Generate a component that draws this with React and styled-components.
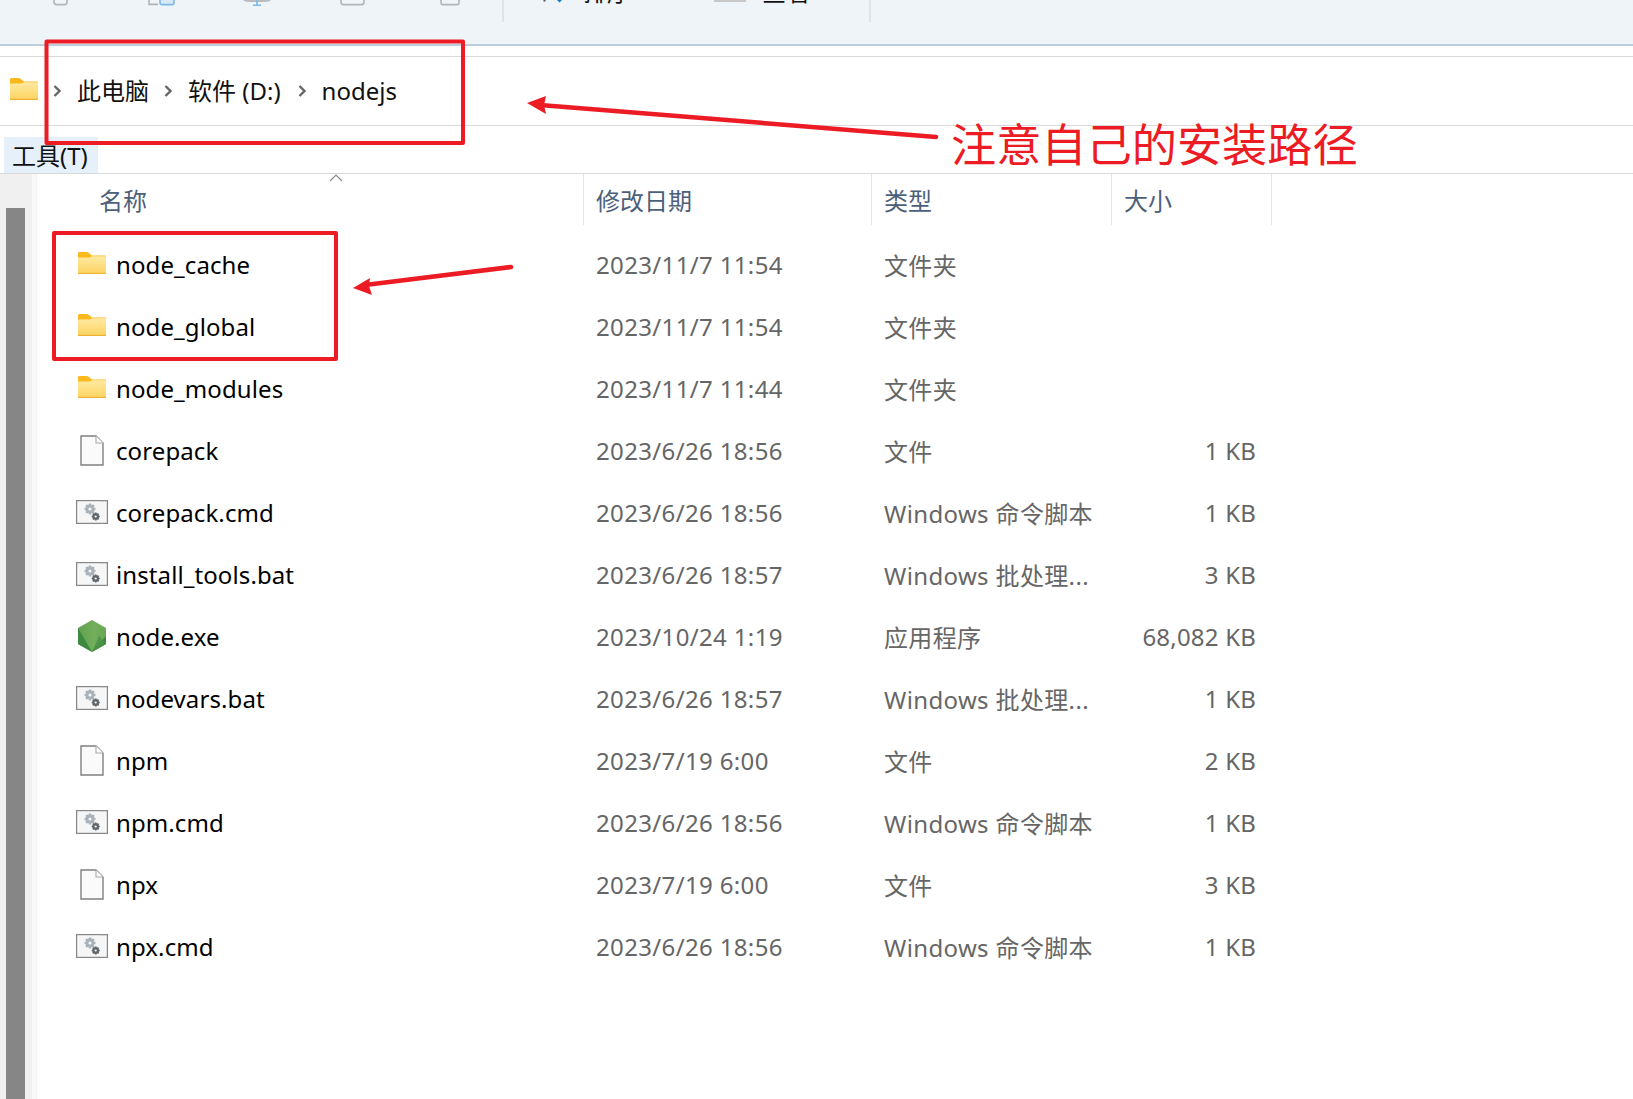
import React from 'react';
import styled, { createGlobalStyle } from 'styled-components';

const GlobalStyle = createGlobalStyle`
    html, body {
        margin: 0;
        padding: 0;
        height: 100%;
        background: #fff;
        overflow: hidden;
    }
    #root {
        height: 1099px;
    }
`;

const FONT = `"Noto Sans", "Noto Sans CJK SC", sans-serif`;

const Page = styled.div`
    position: relative;
    display: flex;
    flex-direction: column;
    width: 1633px;
    height: 1099px;
    overflow: hidden;
    font-family: ${FONT};
    font-size: 24px;
    color: #000;
    background: #fff;
`;

const Ribbon = styled.div`
    display: flex;
    height: 44px;
    flex-shrink: 0;
    background: #eff4f9;
    border-bottom: 2px solid #bccddc;
`;

const RibbonGroup = styled.div`
    display: flex;
    height: 22px;
    width: ${p => p.$width}px;
    border-right: 2px solid #e0e4e8;
`;

const TopIcon = styled.svg`
    display: block;
    margin-left: ${p => p.$left}px;
    flex-shrink: 0;
`;

const RibbonLabel = styled.span`
    margin-left: ${p => p.$left}px;
    margin-top: -25px;
    line-height: 34px;
    font-size: 24px;
    color: #111;
`;

const AddressBar = styled.div`
    display: flex;
    align-items: center;
    height: 68px;
    margin-top: 10px;
    padding-left: 10px;
    flex-shrink: 0;
    border-top: 1px solid #d9d9d9;
    border-bottom: 1px solid #d9d9d9;
`;

const Crumb = styled.span`
    margin-left: ${p => p.$left}px;
    padding-bottom: 1px;
    line-height: 32px;
    white-space: nowrap;
    color: #111;
`;

const Chevron = styled.svg`
    margin-left: ${p => p.$left}px;
    flex-shrink: 0;
`;

const MenuRow = styled.div`
    height: 48px;
    flex-shrink: 0;
    padding: 11px 0 0 4px;
    box-sizing: border-box;
    border-bottom: 1px solid #d9d9d9;
`;

const MenuItem = styled.div`
    width: 94px;
    height: 36px;
    padding-left: 8px;
    box-sizing: border-box;
    line-height: 38px;
    background: #e5f0fa;
    color: #111;
`;

const Body = styled.div`
    display: flex;
    flex: 1;
    min-height: 0;
`;

const ScrollTrack = styled.div`
    width: 19px;
    padding: 34px 7px 0 6px;
    background: #f0f0f0;
    border-right: 4px solid #f9f9f9;
    flex-shrink: 0;
`;

const ScrollThumb = styled.div`
    height: 100%;
    background: #868686;
`;

const List = styled.div`
    position: relative;
    flex: 1;
    border-left: 1px solid #f3f3f3;
`;

const Columns = `
    display: grid;
    grid-template-columns: 547px 288px 240px 160px;
`;

const HeaderRow = styled.div`
    ${Columns}
    height: 51px;
    margin-bottom: 8px;
`;

const HeaderCell = styled.div`
    display: flex;
    align-items: center;
    padding: 2px 0 0 ${p => p.$pad}px;
    border-right: 1px solid #e5e5e5;
    color: #4c607a;
    line-height: 48px;
`;

const SortCaret = styled.svg`
    position: absolute;
    left: 292px;
    top: -1px;
`;

const FileRow = styled.div`
    ${Columns}
    height: 62px;
    align-items: center;
`;

const NameCell = styled.div`
    display: flex;
    align-items: center;
    gap: 8px;
    padding-left: 39px;
`;

const IconSlot = styled.div`
    display: flex;
    align-items: center;
    justify-content: center;
    width: 32px;
    height: 34px;
    flex-shrink: 0;
`;

const FileName = styled.span`
    letter-spacing: 0.1px;
    color: #000;
    white-space: nowrap;
`;

const DataCell = styled.div`
    padding-left: 12px;
    color: #666;
    white-space: nowrap;
    letter-spacing: 0.35px;
`;

const SizeCell = styled.div`
    padding-right: 16px;
    color: #666;
    text-align: right;
    white-space: nowrap;
    letter-spacing: 0.2px;
`;

const Markup = styled.svg`
    position: absolute;
    left: 0;
    top: 0;
    pointer-events: none;
`;

const Note = styled.div`
    position: absolute;
    left: 951px;
    top: 111px;
    font-family: "Noto Sans CJK SC", sans-serif;
    font-size: 45.2px;
    line-height: 64px;
    color: #ed1c24;
    white-space: nowrap;
`;

const FolderSvg = styled.svg`
    display: block;
    flex-shrink: 0;
    margin-bottom: ${p => p.$lift}px;
`;

const FolderIcon = ({ lift }) => (
    <FolderSvg $lift={lift} width="28" height="22" viewBox="0 0 28 22">
        <defs>
            <linearGradient id="folderFill" x1="0" y1="0" x2="0" y2="1">
                <stop offset="0" stopColor="#ffeaa2" />
                <stop offset="1" stopColor="#fcd360" />
            </linearGradient>
        </defs>
        <path d="M0 1.4C0 .6.6 0 1.4 0h7.4c.6 0 1 .2 1.4.6L14 3.4h13c.6 0 1 .4 1 1V6H0z" fill="#fcb91e" />
        <path d="M0 5.4h11.5c.8 0 1.4-.3 2-.9l.6-.3H28V21c0 .6-.4 1-1 1H1c-.6 0-1-.4-1-1z" fill="url(#folderFill)" />
        <rect x="0" y="20.8" width="28" height="1.2" fill="#edb233" />
    </FolderSvg>
);

const DocIcon = () => (
    <svg width="24" height="31" viewBox="0 0 24 31">
        <path d="M1 1h15l7 7v22H1z" fill="#fafafa" stroke="#808080" strokeWidth="1.4" />
        <path d="M16 1v7h7" fill="#fff" stroke="#a8a8a8" strokeWidth="1.1" />
    </svg>
);

const Gear = ({ x, y, r, fill }) => {
    const teeth = [0, 45, 90, 135].map(a => (
        <rect key={a} x={x - r * 0.28} y={y - r * 1.25} width={r * 0.56} height={r * 2.5} fill={fill} transform={`rotate(${a} ${x} ${y})`} />
    ));
    return (
        <g>
            {teeth}
            <circle cx={x} cy={y} r={r} fill={fill} />
            <circle cx={x} cy={y} r={r * 0.35} fill="#f6f6f6" />
        </g>
    );
};

const ScriptIcon = () => (
    <svg width="32" height="25" viewBox="0 0 32 25">
        <rect x=".6" y=".6" width="30.8" height="22.8" fill="#f6f6f6" stroke="#868686" strokeWidth="1.2" />
        <path d="M25 1.4h6" stroke="#c6c6c6" strokeWidth="1.2" strokeDasharray="1 1" />
        <Gear x={14} y={9} r={4.4} fill="#a9b1ba" />
        <Gear x={19.7} y={16.5} r={3.2} fill="#5f666c" />
    </svg>
);

const NodeIcon = () => (
    <svg width="28" height="32" viewBox="0 0 28 32">
        <defs>
            <linearGradient id="nodeFill" x1="0" y1="0" x2="1" y2="0">
                <stop offset="0" stopColor="#5fa04e" />
                <stop offset=".55" stopColor="#72ae5c" />
                <stop offset="1" stopColor="#68a655" />
            </linearGradient>
        </defs>
        <path d="M14 0l14 8v16l-14 8-14-8V8z" fill="url(#nodeFill)" />
        <path d="M0 8l14 24-14-8z" fill="#3c8a3f" />
        <path d="M28 16v8l-14 8z" fill="#3f873f" />
        <path d="M14 32l7-16 7 8z" fill="#4a9247" opacity=".85" />
    </svg>
);

const icons = {
    folder: <FolderIcon lift={2} />,
    doc: <DocIcon />,
    script: <ScriptIcon />,
    node: <NodeIcon />,
};

const files = [
    { name: 'node_cache', date: '2023/11/7 11:54', type: '文件夹', size: '', icon: 'folder' },
    { name: 'node_global', date: '2023/11/7 11:54', type: '文件夹', size: '', icon: 'folder' },
    { name: 'node_modules', date: '2023/11/7 11:44', type: '文件夹', size: '', icon: 'folder' },
    { name: 'corepack', date: '2023/6/26 18:56', type: '文件', size: '1 KB', icon: 'doc' },
    { name: 'corepack.cmd', date: '2023/6/26 18:56', type: 'Windows 命令脚本', size: '1 KB', icon: 'script' },
    { name: 'install_tools.bat', date: '2023/6/26 18:57', type: 'Windows 批处理...', size: '3 KB', icon: 'script' },
    { name: 'node.exe', date: '2023/10/24 1:19', type: '应用程序', size: '68,082 KB', icon: 'node' },
    { name: 'nodevars.bat', date: '2023/6/26 18:57', type: 'Windows 批处理...', size: '1 KB', icon: 'script' },
    { name: 'npm', date: '2023/7/19 6:00', type: '文件', size: '2 KB', icon: 'doc' },
    { name: 'npm.cmd', date: '2023/6/26 18:56', type: 'Windows 命令脚本', size: '1 KB', icon: 'script' },
    { name: 'npx', date: '2023/7/19 6:00', type: '文件', size: '3 KB', icon: 'doc' },
    { name: 'npx.cmd', date: '2023/6/26 18:56', type: 'Windows 命令脚本', size: '1 KB', icon: 'script' },
];

const CrumbChevron = ({ left }) => (
    <Chevron $left={left} width="9" height="14" viewBox="0 0 9 14">
        <path d="M1.5 2L6.5 7l-5 5" fill="none" stroke="#666" strokeWidth="2.4" />
    </Chevron>
);

export default function App() {
    return (
        <Page>
            <GlobalStyle />
            <Ribbon>
                <RibbonGroup $width={502}>
                    <TopIcon $left={53} width="15" height="6" viewBox="0 0 15 6">
                        <path d="M1 0v2c0 1.6 1 2.6 2.6 2.6h8c1.6 0 2.4-1 2.4-2.6V0" fill="none" stroke="#b4b4b4" strokeWidth="1.6" />
                    </TopIcon>
                    <TopIcon $left={80} width="28" height="6" viewBox="0 0 28 6">
                        <path d="M1 0v4.4h9" fill="none" stroke="#b4b4b4" strokeWidth="1.6" />
                        <path d="M12 0v3c0 1 .5 1.6 1.6 1.6h10.8c1 0 1.6-.6 1.6-1.6V0" fill="#d8e9f8" stroke="#7db8e8" strokeWidth="1.6" />
                    </TopIcon>
                    <TopIcon $left={67} width="28" height="6" viewBox="0 0 28 6">
                        <path d="M0 0c2 2 5 2 10 2h8c5 0 8 0 10-2z" fill="#b8bcc0" />
                        <path d="M14 0v5M10 5.2h8" stroke="#7db8e8" strokeWidth="1.6" />
                    </TopIcon>
                    <TopIcon $left={69} width="25" height="6" viewBox="0 0 25 6">
                        <path d="M1 0v2c0 1.6 1 2.6 2.6 2.6h18c1.6 0 2.4-1 2.4-2.6V0" fill="none" stroke="#b4b4b4" strokeWidth="1.6" />
                    </TopIcon>
                    <TopIcon $left={75} width="20" height="6" viewBox="0 0 20 6">
                        <path d="M1 0v3c0 1 .6 1.6 1.6 1.6h14.8c1 0 1.6-.6 1.6-1.6V0" fill="none" stroke="#b4b4b4" strokeWidth="1.6" />
                    </TopIcon>
                </RibbonGroup>
                <RibbonGroup $width={365}>
                    <TopIcon $left={39} width="19" height="5" viewBox="0 0 19 5">
                        <path d="M1.5 0v1.6" stroke="#555" strokeWidth="2" />
                        <path d="M14 0l2.5 2.6L19 0z" fill="#1878d0" />
                    </TopIcon>
                    <RibbonLabel $left={21}>排序</RibbonLabel>
                    <TopIcon $left={83} width="32" height="3" viewBox="0 0 32 3">
                        <rect width="32" height="2" fill="#c8c8c8" />
                    </TopIcon>
                    <RibbonLabel $left={16}>查看</RibbonLabel>
                </RibbonGroup>
            </Ribbon>

            <AddressBar>
                <FolderIcon lift={4} />
                <CrumbChevron left={15} />
                <Crumb $left={15}>此电脑</Crumb>
                <CrumbChevron left={15} />
                <Crumb $left={15}>软件 (D:)</Crumb>
                <CrumbChevron left={17} />
                <Crumb $left={15}>nodejs</Crumb>
            </AddressBar>

            <MenuRow>
                <MenuItem>工具(T)</MenuItem>
            </MenuRow>

            <Body>
                <ScrollTrack>
                    <ScrollThumb />
                </ScrollTrack>
                <List>
                    <SortCaret width="14" height="9" viewBox="0 0 14 9">
                        <path d="M1 8l6-6 6 6" fill="none" stroke="#8a8a8a" strokeWidth="1.2" />
                    </SortCaret>
                    <HeaderRow>
                        <HeaderCell $pad={62}>名称</HeaderCell>
                        <HeaderCell $pad={12}>修改日期</HeaderCell>
                        <HeaderCell $pad={12}>类型</HeaderCell>
                        <HeaderCell $pad={12}>大小</HeaderCell>
                    </HeaderRow>
                    {files.map(file => (
                        <FileRow key={file.name}>
                            <NameCell>
                                <IconSlot>{icons[file.icon]}</IconSlot>
                                <FileName>{file.name}</FileName>
                            </NameCell>
                            <DataCell>{file.date}</DataCell>
                            <DataCell>{file.type}</DataCell>
                            <SizeCell>{file.size}</SizeCell>
                        </FileRow>
                    ))}
                </List>
            </Body>

            <Markup width="1633" height="1099" viewBox="0 0 1633 1099">
                <g fill="none" stroke="#ed1c24" strokeWidth="4" strokeLinejoin="round">
                    <rect x="46.5" y="41.5" width="416.5" height="101.5" />
                    <rect x="54" y="233" width="282" height="126" />
                </g>
                <g stroke="#ed1c24" strokeWidth="4.5" strokeLinecap="round">
                    <line x1="540" y1="105" x2="936" y2="137" />
                    <line x1="365" y1="285" x2="511" y2="267" />
                </g>
                <g fill="#ed1c24">
                    <path d="M527 103l19-7-2 9 2 9z" />
                    <path d="M353 288l17-10-1 8 3 9z" />
                </g>
            </Markup>
            <Note>注意自己的安装路径</Note>
        </Page>
    );
}
